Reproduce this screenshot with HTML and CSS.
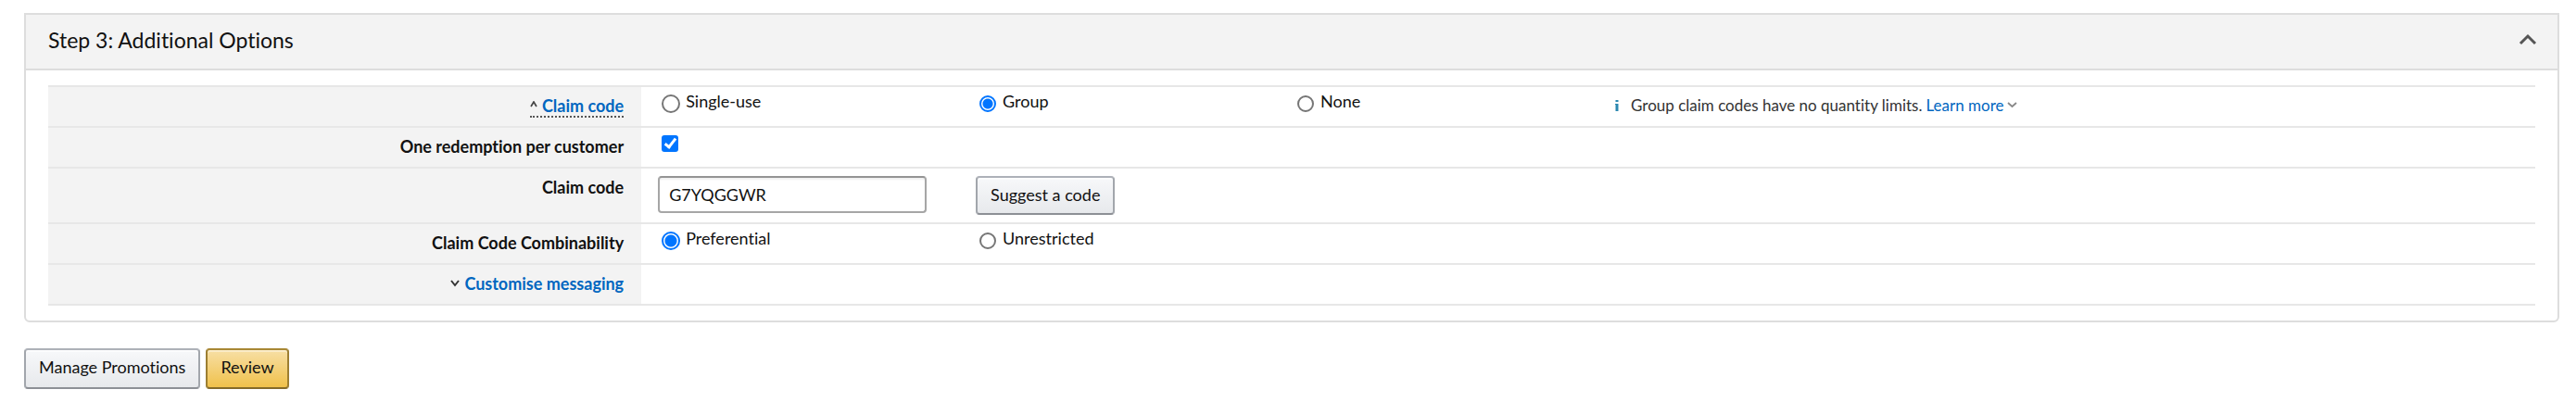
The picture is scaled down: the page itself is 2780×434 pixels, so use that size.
FILE: index.html
```
<!DOCTYPE html>
<html lang="en">
<head>
<meta charset="utf-8">
<title>Additional Options</title>
<link rel="stylesheet" href="styles.css">
</head>
<body>
<form class="page">
  <section class="panel">
    <header class="panel-header">
      <h2 class="panel-title">Step 3: Additional Options</h2>
      <button class="collapse" type="button" aria-label="Collapse section">
        <svg width="20" height="14" viewBox="0 0 20 14" fill="none" stroke="#555" stroke-width="3"><path d="M2 11 10 3l8 8"/></svg>
      </button>
    </header>
    <div class="rows">
      <div class="row">
        <div class="row-label">
          <button class="toggle toggle-dotted" type="button">
            <svg width="8" height="10" viewBox="0 0 8 10" fill="none" stroke="#444" stroke-width="1.7"><path d="M1 6 4 1l3 5"/></svg>
            <span>Claim code</span>
          </button>
        </div>
        <div class="row-data" role="radiogroup" aria-label="Claim code">
          <label class="option option-lead"><input class="radio" type="radio" name="claim">Single-use</label>
          <label class="option"><input class="radio" type="radio" name="claim" checked>Group</label>
          <label class="option"><input class="radio" type="radio" name="claim">None</label>
          <p class="info">
            <svg class="info-icon" width="4" height="12" viewBox="0 0 4 12" fill="#2b87b0"><path d="M.5 0h3v2h-3zM0 4h3.500v8h-3V5H0z"/></svg>
            <span>Group claim codes have no quantity limits.</span>
            <a class="link" href="#">Learn more</a>
            <svg width="11" height="8" viewBox="0 0 11 8" fill="none" stroke="#888" stroke-width="1.8"><path d="m1 1 4.500 4L10 1"/></svg>
          </p>
        </div>
      </div>
      <div class="row">
        <label class="row-label" for="once">One redemption per customer</label>
        <div class="row-data"><input class="check" type="checkbox" id="once" checked></div>
      </div>
      <div class="row">
        <label class="row-label" for="code">Claim code</label>
        <div class="row-data row-fields">
          <div><input class="text-input" type="text" id="code" value="G7YQGGWR"></div>
          <div><button class="button button-small" type="button">Suggest a code</button></div>
        </div>
      </div>
      <div class="row">
        <div class="row-label" id="combine">Claim Code Combinability</div>
        <div class="row-data" role="radiogroup" aria-labelledby="combine">
          <label class="option option-lead"><input class="radio" type="radio" name="combine" checked>Preferential</label>
          <label class="option"><input class="radio" type="radio" name="combine">Unrestricted</label>
        </div>
      </div>
      <div class="row">
        <div class="row-label">
          <button class="toggle" type="button">
            <svg width="10" height="8" viewBox="0 0 10 8" fill="none" stroke="#333" stroke-width="2"><path d="m1 1 4 5 4-5"/></svg>
            <span>Customise messaging</span>
          </button>
        </div>
        <div class="row-data"></div>
      </div>
    </div>
  </section>
  <div class="actions">
    <button class="button" type="button">Manage Promotions</button>
    <button class="button button-primary" type="submit">Review</button>
  </div>
</form>
</body>
</html>
```
FILE: styles.css
```
*,
*::before {
  box-sizing: border-box;
}

body {
  margin: 0;
  background: #fff;
  color: #111;
  font: 18px/22px Lato, "Open Sans", sans-serif;
  font-variant-ligatures: none;
}

button,
input {
  margin: 0;
  color: inherit;
  font: inherit;
  font-variant-ligatures: inherit;
}

.page {
  padding: 14px 18px 14px 26px;
}

.panel {
  border: 2px solid #ddd;
  border-radius: 0 0 6px 6px;
}

.panel-header {
  display: flex;
  align-items: center;
  justify-content: space-between;
  padding: 13px 22px 17px 24px;
  border-bottom: 2px solid #ddd;
  background: #f3f3f3;
}

.panel-title {
  margin: 0;
  font-size: 23px;
  font-weight: 400;
  line-height: 28px;
}

.collapse {
  display: flex;
  padding: 0;
  border: 0;
  background: none;
}

.rows {
  margin: 16px 24px;
  border-top: 2px solid #e7e7e7;
}

.row {
  display: grid;
  grid-template-columns: 23.85% 1fr;
  min-height: 44px;
  border-bottom: 2px solid #e7e7e7;
}

.row-label {
  padding: 9px 19px 8px 0;
  background: #f3f3f3;
  font-weight: 700;
  text-align: right;
}

.toggle {
  display: flex;
  align-items: center;
  gap: 5px;
  margin-left: auto;
  padding: 0;
  border: 0;
  background: none;
  color: #0066c0;
}

.toggle-dotted {
  border-bottom: 2px dotted #555;
}

.row-data {
  display: grid;
  grid-template-columns: repeat(3, 16.93%) 1fr;
  align-items: start;
  padding: 4px 0 4px 18px;
}

.row-fields {
  padding-top: 8px;
  padding-bottom: 8px;
}

.option {
  display: flex;
  align-items: flex-start;
  gap: 7px;
}

.option-lead {
  gap: 6px;
}

.radio {
  appearance: none;
  flex: none;
  width: 18px;
  height: 18px;
  margin: 5px 0 0 4px;
  border: 2px solid #767676;
  border-radius: 50%;
  background: #fff;
}

.option-lead .radio {
  width: 20px;
  height: 20px;
  margin-top: 4px;
}

.radio:checked {
  border-color: #0075ff;
  background: radial-gradient(circle, #0075ff 5px, #fff 6px);
}

.option-lead .radio:checked {
  background: radial-gradient(circle, #0075ff 6px, #fff 7px);
}

.check {
  appearance: none;
  width: 18px;
  height: 18px;
  margin: 4px;
  border-radius: 3px;
  background: #0075ff;
}

.check:checked::before {
  content: "";
  display: block;
  width: 7px;
  height: 13px;
  margin: 1px 0 0 6px;
  border: solid #fff;
  border-width: 0 3px 3px 0;
  transform: rotate(38deg);
}

.info {
  display: flex;
  align-items: center;
  gap: 4px;
  margin: 5px 0 0;
  padding-left: 4px;
  color: #333;
  font-size: 17px;
}

.info-icon {
  margin-right: 9px;
}

.link {
  color: #0066c0;
  text-decoration: none;
}

.text-input {
  display: block;
  width: 290px;
  max-width: 100%;
  height: 40px;
  padding: 0 10px;
  border: 2px solid #a6a6a6;
  border-top-color: #949494;
  border-radius: 4px;
  background: #fff;
  box-shadow: inset 0 2px 2px #f0f0f0;
}

.button {
  display: block;
  padding: 7px 14px 11px;
  border: 2px solid #a2a6ac;
  border-color: #adb1b8 #a2a6ac #8d9096;
  border-radius: 4px;
  background: linear-gradient(#f7f8fa, #e7e9ec);
  box-shadow: inset 0 2px 0 #fff9;
}

.button-small {
  padding-bottom: 9px;
}

.button-primary {
  border-color: #a88734 #9c7e31 #846a29;
  background: linear-gradient(#f7dfa5, #f0c14b);
  box-shadow: inset 0 2px 0 #fff6;
}

.actions {
  display: flex;
  gap: 6px;
  margin-top: 28px;
}
```
